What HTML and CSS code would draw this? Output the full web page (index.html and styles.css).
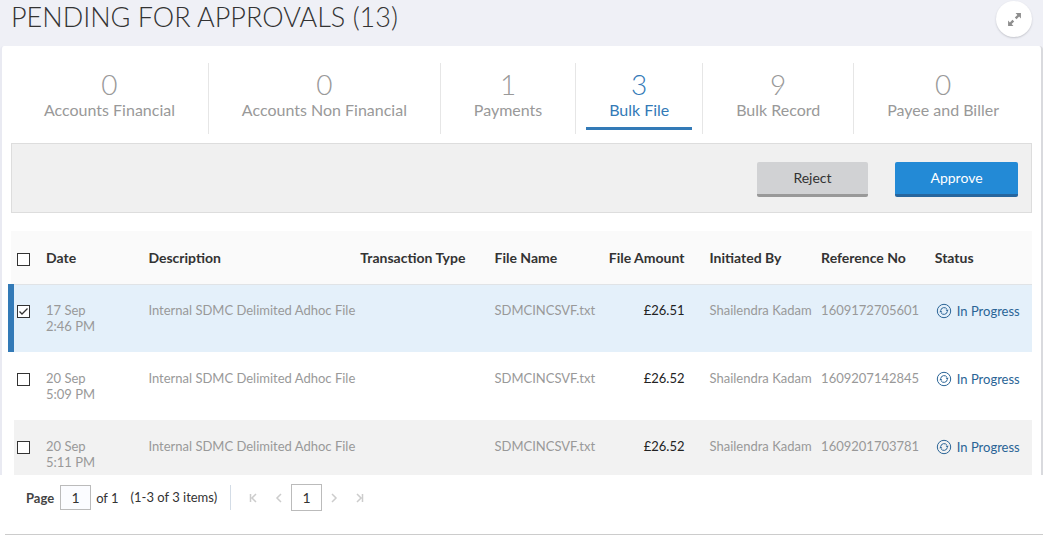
FILE: index.html
```
<!DOCTYPE html>
<html lang="en">
<head>
<meta charset="utf-8">
<title>Pending for Approvals</title>
<link rel="stylesheet" href="styles.css">
</head>
<body>
<svg class="sprite" aria-hidden="true">
  <symbol id="progress" viewBox="0 0 16 16">
    <g fill="none" stroke="currentColor" stroke-width="1">
      <circle cx="8" cy="8" r="6.7"/>
      <path d="M4.7 7.5a3.4 3.4 0 0 1 6.3-1.2M11.3 8.5A3.4 3.4 0 0 1 5 9.700"/>
    </g>
    <path fill="currentColor" d="M9.600 6.800h3L11.300 8.800zM3.400 9.200h3L4.700 7.200z"/>
  </symbol>
</svg>
<main class="page">
  <header class="page-head">
    <h1 class="title">PENDING FOR APPROVALS (13)</h1>
    <button class="expand" type="button" aria-label="Expand">
      <svg viewBox="0 0 14 14" width="15" height="15"><path fill="#8e8e8e" d="M8 1h5v5l-1.700-1.700-2.400 2.400-1.600-1.600 2.400-2.400zM6 13H1V8l1.700 1.700 2.400-2.400 1.600 1.600-2.400 2.400z"/></svg>
    </button>
  </header>
  <section class="card">
    <nav class="tabs">
      <a class="tab" href="#"><span class="count">0</span><span class="label">Accounts Financial</span></a>
      <a class="tab" href="#"><span class="count">0</span><span class="label">Accounts Non Financial</span></a>
      <a class="tab" href="#"><span class="count">1</span><span class="label">Payments</span></a>
      <a class="tab active" href="#" aria-current="page"><span class="tab-body"><span class="count">3</span><span class="label">Bulk File</span></span></a>
      <a class="tab" href="#"><span class="count">9</span><span class="label">Bulk Record</span></a>
      <a class="tab" href="#"><span class="count">0</span><span class="label">Payee and Biller</span></a>
    </nav>
    <div class="actions">
      <button class="btn reject" type="button">Reject</button>
      <button class="btn approve" type="button">Approve</button>
    </div>
    <table class="grid">
      <colgroup><col class="c-check"><col class="c-date"><col class="c-desc"><col class="c-type"><col class="c-name"><col class="c-amount"><col class="c-by"><col class="c-ref"><col class="c-status"></colgroup>
      <thead>
        <tr><th class="check"><input type="checkbox" aria-label="Select all"></th><th>Date</th><th>Description</th><th>Transaction Type</th><th>File Name</th><th class="amount">File Amount</th><th>Initiated By</th><th>Reference No</th><th>Status</th></tr>
      </thead>
      <tbody>
        <tr class="selected"><td class="check"><input type="checkbox" checked aria-label="Select 1609172705601"></td><td>17 Sep<br>2:46 PM</td><td>Internal SDMC Delimited Adhoc File</td><td></td><td>SDMCINCSVF.txt</td><td class="amount">£26.51</td><td>Shailendra Kadam</td><td>1609172705601</td><td><a class="status" href="#"><svg class="icon"><use href="#progress"/></svg>In Progress</a></td></tr>
        <tr><td class="check"><input type="checkbox" aria-label="Select 1609207142845"></td><td>20 Sep<br>5:09 PM</td><td>Internal SDMC Delimited Adhoc File</td><td></td><td>SDMCINCSVF.txt</td><td class="amount">£26.52</td><td>Shailendra Kadam</td><td>1609207142845</td><td><a class="status" href="#"><svg class="icon"><use href="#progress"/></svg>In Progress</a></td></tr>
        <tr class="last"><td class="check"><input type="checkbox" aria-label="Select 1609201703781"></td><td>20 Sep<br>5:11 PM</td><td>Internal SDMC Delimited Adhoc File</td><td></td><td>SDMCINCSVF.txt</td><td class="amount">£26.52</td><td>Shailendra Kadam</td><td>1609201703781</td><td><a class="status" href="#"><svg class="icon"><use href="#progress"/></svg>In Progress</a></td></tr>
      </tbody>
    </table>
  </section>
  <footer class="pager">
    <label class="page-label" for="page">Page</label>
    <input class="page-input" id="page" type="text" value="1">
    <span class="of">of 1</span>
    <span class="range">(1-3 of 3 items)</span>
    <div class="pages">
      <button class="nav" type="button" aria-label="First page"><svg viewBox="0 0 8 10" width="8" height="10"><path d="M1.500 1v8M7 1 3 5l4 4"/></svg></button>
      <button class="nav" type="button" aria-label="Previous page"><svg viewBox="0 0 8 10" width="8" height="10"><path d="M6 1 2 5l4 4"/></svg></button>
      <button class="current" type="button">1</button>
      <button class="nav" type="button" aria-label="Next page"><svg viewBox="0 0 8 10" width="8" height="10"><path d="m2 1 4 4-4 4"/></svg></button>
      <button class="nav" type="button" aria-label="Last page"><svg viewBox="0 0 8 10" width="8" height="10"><path d="M6.500 1v8M1 1l4 4-4 4"/></svg></button>
    </div>
  </footer>
</main>
</body>
</html>
```
FILE: styles.css
```
* { box-sizing: border-box; }
body { margin: 0; background: #fff; color: #333; font-family: Lato, sans-serif; font-size: 14px; }
button, input { font: inherit; color: inherit; }
.sprite { display: none; }
.page-head { display: flex; justify-content: space-between; height: 46px; padding: 1px 11px 0 11px; background: #eff0f6; }
.title { margin: 0; font-size: 27px; line-height: 32px; font-weight: 300; color: #333; }
.expand { display: flex; align-items: center; justify-content: center; width: 36px; height: 36px; padding: 0; border: 0; border-radius: 50%; background: #fff; box-shadow: 0 1px 2px #c4c5cc; }
.card { padding: 17px 9px 0 6px; border-left: 2px solid #e9eaf2; border-right: 2px solid #d9dade; border-radius: 4px 4px 0 0; background: #fff; }
.page { background: linear-gradient(#eff0f6 60px, #fff 60px); }
.tabs { display: flex; margin-left: 3px; }
.tab { flex: 1 1 auto; display: flex; flex-direction: column; align-items: center; height: 71px; padding: 5px 10px 0; border-right: 1px solid #e6e6e6; color: #999; text-decoration: none; white-space: nowrap; }
.tab:last-child { border-right: 0; }
.tab-body { display: flex; flex-direction: column; align-items: center; align-self: stretch; height: 62px; border-bottom: 3px solid #337ab7; }
.active { color: #337ab7; }
.count { font-size: 28px; line-height: 32px; font-weight: 300; }
.label { font-size: 16px; line-height: 20px; padding: 0 22px; }
.actions { display: flex; justify-content: flex-end; gap: 27px; margin: 9px 0 18px 3px; padding: 18px 13px 15px; border: 1px solid #ddd; background: #f0f0f0; }
.btn { height: 35px; padding: 0; border: 0; border-bottom: 3px solid; border-radius: 2px; line-height: 32px; }
.reject { width: 111px; background: #d1d2d4; border-color: #999; }
.approve { width: 123px; background: #238ad6; border-color: #27669e; color: #fff; }
.grid { width: 100%; table-layout: fixed; border-collapse: separate; border-spacing: 0; }
.c-check { width: 38px; }
.c-date { width: 10%; }
.c-desc { width: 20.700%; }
.c-type { width: 13.100%; }
.c-name { width: 10.800%; }
.c-amount { width: 10.200%; }
.c-by { width: 10.900%; }
.c-ref { width: 11.100%; }
th, td { padding: 0; text-align: left; vertical-align: top; white-space: nowrap; background-clip: padding-box; }
th { height: 53px; padding-top: 18px; background-color: #fafafa; font-weight: 700; line-height: 18px; }
td { height: 68px; padding-top: 18px; font-size: 13px; line-height: 16px; color: #999; }
th.check { padding-left: 6px; border-left: 3px solid transparent; }
td.check { border-left: 6px solid transparent; padding-left: 3px; }
.check input { display: block; appearance: none; width: 13px; height: 13px; margin: 4px 0 0; border: 1px solid #333; background: #fff; }
td.check input { margin-top: 3px; }
.check input:checked { background: #fff url("data:image/svg+xml,%3Csvg xmlns='http://www.w3.org/2000/svg' viewBox='0 0 11 11'%3E%3Cpath d='M1.500 5.500 4 8l5.500-5.500' fill='none' stroke='%23333' stroke-width='1.300'/%3E%3C/svg%3E"); }
th.amount, td.amount { padding-right: 25px; text-align: right; }
td.amount { color: #222; }
.selected td { background-color: #e4f0fa; box-shadow: inset 0 1px #e0e3e6; }
.selected td.check { border-left-color: #337ab7; }
.last td { height: 55px; background-color: #f2f2f2; }
.status { display: flex; align-items: center; gap: 5px; padding-left: 1px; line-height: 18px; color: #2a6496; text-decoration: none; }
.icon { width: 16px; height: 16px; }
.pager { display: flex; align-items: center; height: 60px; margin-left: 5px; padding: 0 21px 14px; border-bottom: 1px solid #ccc; font-size: 13px; }
.page-label { font-weight: 700; color: #444; }
.page-input { width: 31px; height: 25px; margin: 0 5px 0 6px; padding: 0; border: 1px solid #bbb; background: #fbfcff; text-align: center; font-size: 14px; }
.range { margin-left: 12px; padding-right: 13px; border-right: 1px solid #d3dce6; line-height: 25px; }
.pages { display: flex; align-items: center; margin-left: 18px; }
.nav { display: flex; width: 8px; height: 10px; padding: 0; border: 0; background: none; }
.nav path { fill: none; stroke: #ccc; stroke-width: 1.500; }
.nav + .nav { margin-left: 18px; }
.current { width: 31px; height: 27px; margin: 0 8px; padding: 0; border: 1px solid #bbb; background: #fff; font-size: 14px; }
```
